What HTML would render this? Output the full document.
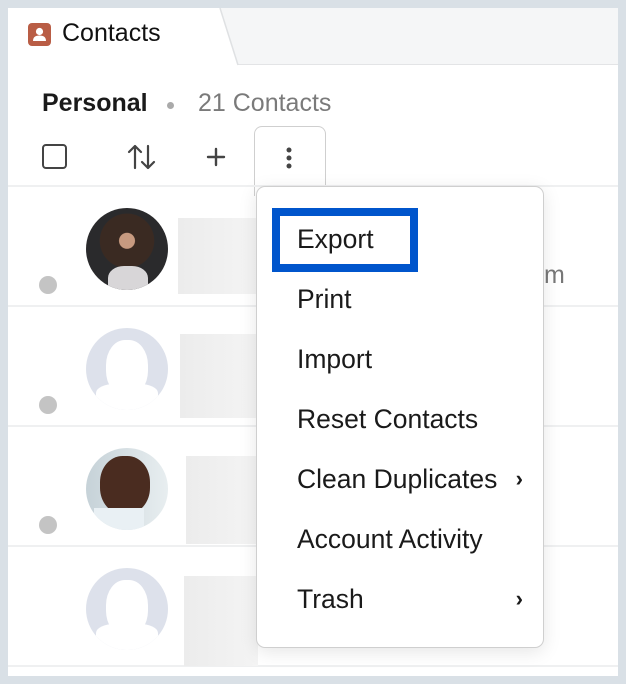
<!DOCTYPE html>
<html><head><style>
*{margin:0;padding:0;box-sizing:border-box}
body{width:626px;height:684px;background:#d9e0e6;font-family:"Liberation Sans",sans-serif;position:relative;overflow:hidden}
.panel{position:absolute;left:8px;top:8px;width:610px;height:668px;background:#fff;overflow:hidden}
.abs{position:absolute}
.sep{position:absolute;left:0;width:610px;height:2px;background:#eff0f1}
.dot{position:absolute;left:31px;width:18px;height:18px;border-radius:50%;background:#c4c4c4}
.av{position:absolute;left:78px;width:82px;height:82px;border-radius:50%;overflow:hidden}
.blur{position:absolute;background:linear-gradient(90deg,#ececec,#f4f4f4);}
.menu{position:absolute;left:248px;top:178px;width:288px;height:462px;background:#fff;border:1.5px solid #cfcfcf;border-radius:9px;box-shadow:0 4px 18px rgba(0,0,0,.10)}
.mi{position:absolute;left:40px;font-size:26.5px;color:#1a1a1a;line-height:30px}
.chev{position:absolute;right:20px;font-size:22px;font-weight:bold;color:#1a1a1a}
</style></head><body>
<div class="panel">
 <div class="abs" style="left:0;top:0;width:610px;height:57px;background:#f5f6f7;border-bottom:1.5px solid #e3e4e6"></div>
 <svg class="abs" style="left:0;top:0" width="240" height="58"><polygon points="0,0 212,0 230,57 0,57" fill="#fff" stroke="none"/><line x1="212" y1="0" x2="230" y2="57" stroke="#dfe1e3" stroke-width="1.5"/></svg>
 <div class="abs" style="left:20px;top:15px;width:23px;height:23px;border-radius:4px;background:#b95d45">
  <svg width="23" height="23"><circle cx="11.5" cy="8.5" r="3.6" fill="#fff"/><path d="M5 18 Q5 12.5 11.5 12.5 Q18 12.5 18 18 Z" fill="#fff"/></svg>
 </div>
 <div class="abs" style="left:54px;top:11px;font-size:25px;color:#111">Contacts</div>
 <div class="abs" style="left:34px;top:81px;font-size:25px;font-weight:bold;color:#1a1a1a">Personal</div>
 <div class="abs" style="left:159px;top:94px;width:7px;height:7px;border-radius:50%;background:#aaa"></div>
 <div class="abs" style="left:190px;top:81px;font-size:25px;color:#7a7a7a">21 Contacts</div>
 <div class="abs" style="left:34px;top:136px;width:25px;height:25px;border:2px solid #444;border-radius:4px"></div>
 <svg class="abs" style="left:118px;top:134px" width="32" height="30" fill="none" stroke="#444" stroke-width="2.2" stroke-linecap="round" stroke-linejoin="round"><path d="M9 26V4M3 10L9 4L15 10"/><path d="M22 4V26M16 20L22 26L28 20"/></svg>
 <svg class="abs" style="left:197px;top:138px" width="22" height="22" stroke="#444" stroke-width="2.4" stroke-linecap="round"><path d="M11 3V19M3 11H19"/></svg>
 <div class="abs" style="left:246px;top:118px;width:72px;height:70px;border:1.5px solid #cfcfcf;border-bottom:none;border-radius:8px 8px 0 0;background:#fff"></div>
 <svg class="abs" style="left:276px;top:138px" width="10" height="26" fill="#444"><circle cx="5" cy="4" r="2.5"/><circle cx="5" cy="12" r="2.5"/><circle cx="5" cy="20" r="2.5"/></svg>
 <div class="sep" style="top:177px"></div>
 <div class="sep" style="top:297px"></div>
 <div class="sep" style="top:417px"></div>
 <div class="sep" style="top:537px"></div>
 <div class="sep" style="top:657px"></div>
 <div class="dot" style="top:268px"></div>
 <div class="dot" style="top:388px"></div>
 <div class="dot" style="top:508px"></div>
 <div class="av" style="top:200px;background:radial-gradient(circle at 50% 40%,#c79a80 0 12%,#3a2a22 13% 42%,#2a2a2c 43%)"><div style="position:absolute;left:22px;top:58px;width:40px;height:30px;background:#d8d6d8;border-radius:40% 40% 0 0"></div></div>
 <div class="av" style="top:320px;background:#dde1eb"><div style="position:absolute;left:20px;top:12px;width:42px;height:56px;border-radius:45%;background:#fff"></div><div style="position:absolute;left:10px;top:56px;width:62px;height:30px;background:#fff;border-radius:30% 30% 0 0"></div></div>
 <div class="av" style="top:440px;background:linear-gradient(90deg,#c6d2d8,#e8eef0)"><div style="position:absolute;left:14px;top:8px;width:50px;height:58px;border-radius:45%;background:#4a2c20"></div><div style="position:absolute;left:8px;top:60px;width:50px;height:30px;background:#e9f0f4"></div></div>
 <div class="av" style="top:560px;background:#dde1eb"><div style="position:absolute;left:20px;top:12px;width:42px;height:56px;border-radius:45%;background:#fff"></div><div style="position:absolute;left:10px;top:56px;width:62px;height:30px;background:#fff;border-radius:30% 30% 0 0"></div></div>
 <div class="blur" style="left:170px;top:210px;width:80px;height:76px"></div>
 <div class="blur" style="left:172px;top:326px;width:78px;height:84px"></div>
 <div class="blur" style="left:178px;top:448px;width:72px;height:88px"></div>
 <div class="blur" style="left:176px;top:568px;width:74px;height:90px"></div>
 <div class="abs" style="left:536px;top:253px;font-size:25px;color:#777">m</div>
 <div class="menu">
  <div class="abs" style="left:15px;top:21px;width:146px;height:64px;border:8px solid #0055cc"></div>
  <div class="mi" style="top:37px">Export</div>
  <div class="mi" style="top:97px">Print</div>
  <div class="mi" style="top:157px">Import</div>
  <div class="mi" style="top:217px">Reset Contacts</div>
  <div class="mi" style="top:277px">Clean Duplicates</div><div class="chev" style="top:279px">›</div>
  <div class="mi" style="top:337px">Account Activity</div>
  <div class="mi" style="top:397px">Trash</div><div class="chev" style="top:399px">›</div>
 </div>
</div>
</body></html>
